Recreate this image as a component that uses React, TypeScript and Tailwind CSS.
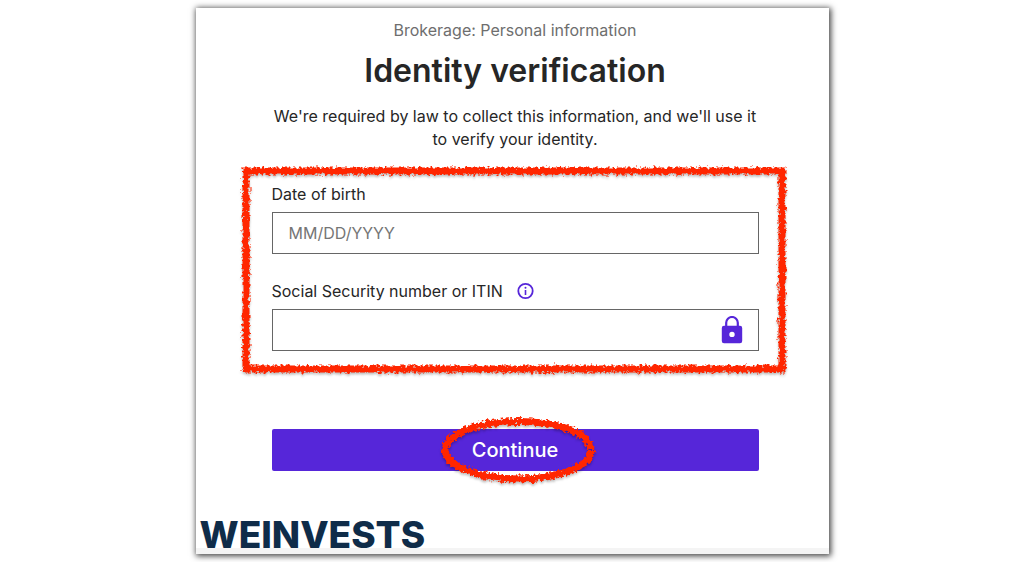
import React from "react";

interface FieldProps {
  id: string;
  label: string;
  placeholder?: string;
  info?: boolean;
  icon?: React.ReactNode;
}

const InfoIcon = () => (
  <svg viewBox="0 0 18 18" className="h-[18px] w-[18px]" fill="none">
    <circle cx="8.5" cy="9" r="7.2" stroke="#5626d9" strokeWidth="1.8" />
    <circle cx="8.5" cy="5.8" r="1" fill="#5626d9" />
    <path d="M8.5 8v5" stroke="#5626d9" strokeWidth="1.6" />
  </svg>
);

const LockIcon = () => (
  <svg viewBox="0 0 22 28" className="h-7 w-[22px]" fill="none">
    <path
      d="M5.2 11V6.8a5.8 5.8 0 0 1 11.6 0V11"
      stroke="#5626d9"
      strokeWidth="2.2"
    />
    <path
      fillRule="evenodd"
      d="M3 9.8h16a2.2 2.2 0 0 1 2.2 2.2v13a2.2 2.2 0 0 1-2.2 2.2H3A2.2 2.2 0 0 1 .8 25V12A2.2 2.2 0 0 1 3 9.8zM11 15.7a2.7 2.7 0 1 0 0 5.4a2.7 2.7 0 0 0 0-5.4z"
      fill="#5626d9"
    />
  </svg>
);

// Rough crayon edge shared by the red marks
const CrayonFilter = ({ id }: { id: string }) => (
  <filter
    id={id}
    x="-5%"
    y="-10%"
    width="110%"
    height="125%"
    colorInterpolationFilters="sRGB"
  >
    <feTurbulence
      type="fractalNoise"
      baseFrequency="0.35"
      numOctaves="2"
      seed="4"
      result="noise"
    />
    <feDisplacementMap
      in="SourceGraphic"
      in2="noise"
      scale="7"
      xChannelSelector="R"
      yChannelSelector="G"
      result="rough"
    />
    <feDropShadow
      in="rough"
      dx="0"
      dy="2"
      stdDeviation="1"
      floodColor="#000000"
      floodOpacity="0.25"
    />
  </filter>
);

const BoxMark = () => (
  <svg
    viewBox="0 0 544 206"
    preserveAspectRatio="none"
    className="pointer-events-none absolute inset-0 h-full w-full overflow-visible"
    aria-hidden="true"
  >
    <CrayonFilter id="crayon-box" />
    <path
      d="M4 4H540V202H4Z"
      fill="none"
      stroke="#ff2600"
      strokeWidth="7"
      filter="url(#crayon-box)"
    />
  </svg>
);

const EllipseMark = () => (
  <svg
    viewBox="0 0 160 68"
    className="pointer-events-none absolute top-1/2 left-1/2 h-[68px] w-[160px] -translate-x-1/2 -translate-y-1/2 overflow-visible"
    aria-hidden="true"
  >
    <CrayonFilter id="crayon-ellipse" />
    <path
      d="M156 33C154 16 122 5.5 83 5.5S10 18 10 34S45 63 83 63S156 51 156 35"
      fill="none"
      stroke="#ff2600"
      strokeWidth="7"
      filter="url(#crayon-ellipse)"
    />
  </svg>
);

const Field: React.FC<FieldProps> = ({
  id,
  label,
  placeholder,
  info,
  icon,
}) => {
  return (
    <div>
      <div className="mb-2 flex h-5 items-center gap-[14px]">
        <label htmlFor={id} className="text-base leading-5 text-[#262626]">
          {label}
        </label>
        {info && (
          <button type="button" aria-label="More information">
            <InfoIcon />
          </button>
        )}
      </div>
      <div className="flex h-[42px] items-center border border-[#666666] pr-[15px] pl-4">
        <input
          id={id}
          type="text"
          placeholder={placeholder}
          className="w-full min-w-0 flex-1 bg-transparent text-base outline-none placeholder:text-[#757575]"
        />
        {icon}
      </div>
    </div>
  );
};

const App: React.FC = () => {
  return (
    <div className="bg-white px-4 py-2 font-['Inter',sans-serif] text-[#262626]">
      <main className="mx-auto w-full max-w-[633px] border-b-[6px] border-[#f4f4f4] bg-white shadow-[1px_1px_6px_1px_rgba(0,0,0,0.75)]">
        <div className="pt-3 pr-[43px] pl-[46px]">
          <header className="pr-[27px] pl-[30px] text-center">
            <p className="text-base leading-5 text-[#6e6e6e]">
              Brokerage: Personal information
            </p>
            <h1 className="mt-[9px] text-[32px] leading-[44px] font-semibold">
              Identity verification
            </h1>
            <p className="mt-3 text-base leading-[23px]">
              We're required by law to collect this information, and we'll use
              it to verify your identity.
            </p>
          </header>

          <form onSubmit={(e) => e.preventDefault()}>
            <div className="relative mt-4 flex flex-col gap-[27px] pt-[17px] pr-[27px] pb-[22px] pl-[30px]">
              <Field id="dob" label="Date of birth" placeholder="MM/DD/YYYY" />
              <Field
                id="ssn"
                label="Social Security number or ITIN"
                info
                icon={<LockIcon />}
              />
              <BoxMark />
            </div>
            <div className="mt-14 pr-[27px] pl-[30px]">
              <button
                type="submit"
                className="relative h-[42px] w-full rounded-xs bg-[#5626d9] text-xl font-medium text-white"
              >
                Continue
                <EllipseMark />
              </button>
            </div>
          </form>
        </div>
        <p className="mt-[51px] px-1 text-[37px] leading-[26px] font-extrabold text-[#0f2c49]">
          WEINVESTS
        </p>
      </main>
    </div>
  );
};

export default App;
